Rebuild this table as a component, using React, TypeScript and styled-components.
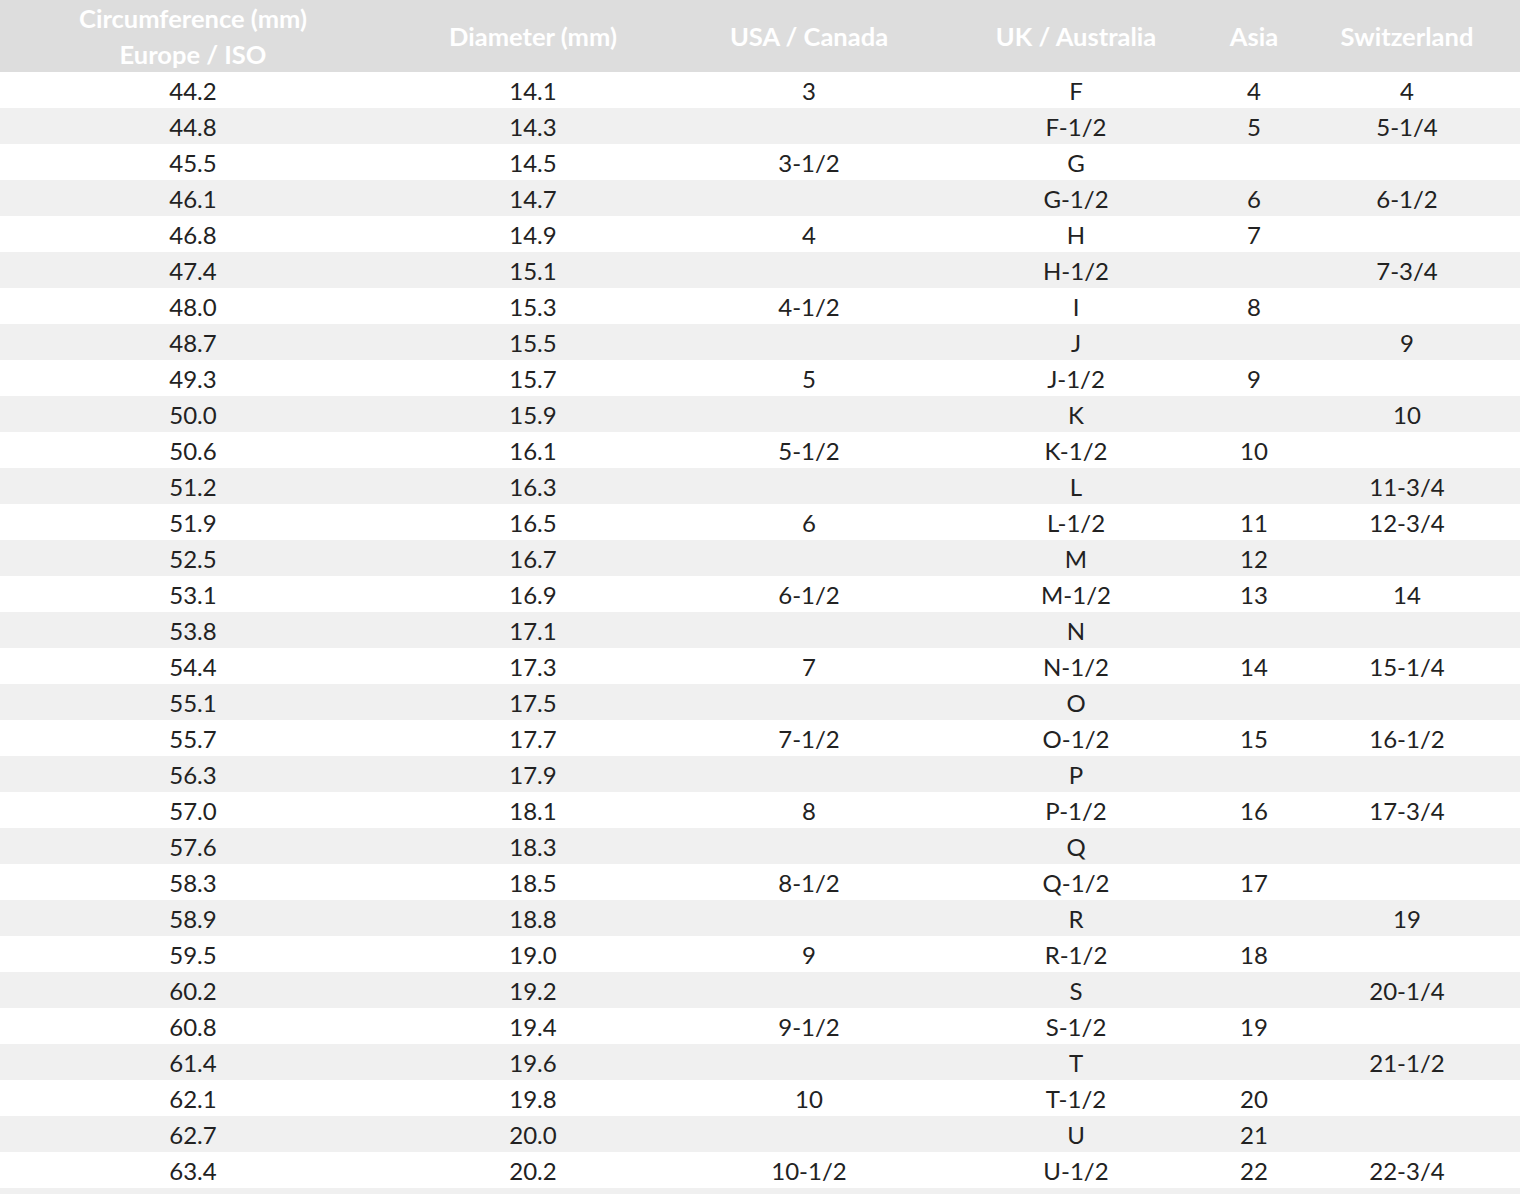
import React from "react";
import styled, { createGlobalStyle } from "styled-components";

const GlobalStyle = createGlobalStyle`
  html, body {
    margin: 0;
    padding: 0;
    background: #fff;
  }
  body {
    font-family: Lato, "Liberation Sans", sans-serif;
  }
`;

const Table = styled.table`
  width: 100%;
  border-collapse: collapse;
  table-layout: fixed;
  font-size: 24px;
  color: #222;
`;

const HeadCell = styled.th<{ $w: number }>`
  width: ${(p) => p.$w}px;
  height: 72px;
  padding: 0;
  background: #dddddd;
  color: #fff;
  font-size: 25.5px;
  font-weight: 700;
  line-height: 36px;
  text-align: center;
  vertical-align: middle;
`;

const Row = styled.tr`
  height: 36px;
  &:nth-child(even) {
    background: #f0f0f0;
  }
`;

const Cell = styled.td`
  box-sizing: border-box;
  padding: 1px 0 0;
  height: 36px;
  line-height: 35px;
  text-align: center;
  font-weight: 400;
`;

const columns: [React.ReactNode, number][] = [
  [<>Circumference (mm)<br />Europe / ISO</>, 386],
  ["Diameter (mm)", 294],
  ["USA / Canada", 258],
  ["UK / Australia", 276],
  ["Asia", 80],
  ["Switzerland", 226],
];

const rows: string[][] = [
  ["44.2", "14.1", "3", "F", "4", "4"],
  ["44.8", "14.3", "", "F-1/2", "5", "5-1/4"],
  ["45.5", "14.5", "3-1/2", "G", "", ""],
  ["46.1", "14.7", "", "G-1/2", "6", "6-1/2"],
  ["46.8", "14.9", "4", "H", "7", ""],
  ["47.4", "15.1", "", "H-1/2", "", "7-3/4"],
  ["48.0", "15.3", "4-1/2", "I", "8", ""],
  ["48.7", "15.5", "", "J", "", "9"],
  ["49.3", "15.7", "5", "J-1/2", "9", ""],
  ["50.0", "15.9", "", "K", "", "10"],
  ["50.6", "16.1", "5-1/2", "K-1/2", "10", ""],
  ["51.2", "16.3", "", "L", "", "11-3/4"],
  ["51.9", "16.5", "6", "L-1/2", "11", "12-3/4"],
  ["52.5", "16.7", "", "M", "12", ""],
  ["53.1", "16.9", "6-1/2", "M-1/2", "13", "14"],
  ["53.8", "17.1", "", "N", "", ""],
  ["54.4", "17.3", "7", "N-1/2", "14", "15-1/4"],
  ["55.1", "17.5", "", "O", "", ""],
  ["55.7", "17.7", "7-1/2", "O-1/2", "15", "16-1/2"],
  ["56.3", "17.9", "", "P", "", ""],
  ["57.0", "18.1", "8", "P-1/2", "16", "17-3/4"],
  ["57.6", "18.3", "", "Q", "", ""],
  ["58.3", "18.5", "8-1/2", "Q-1/2", "17", ""],
  ["58.9", "18.8", "", "R", "", "19"],
  ["59.5", "19.0", "9", "R-1/2", "18", ""],
  ["60.2", "19.2", "", "S", "", "20-1/4"],
  ["60.8", "19.4", "9-1/2", "S-1/2", "19", ""],
  ["61.4", "19.6", "", "T", "", "21-1/2"],
  ["62.1", "19.8", "10", "T-1/2", "20", ""],
  ["62.7", "20.0", "", "U", "21", ""],
  ["63.4", "20.2", "10-1/2", "U-1/2", "22", "22-3/4"],
  ["", "", "", "", "", ""],
];

export default function App() {
  return (
    <>
      <GlobalStyle />
      <Table>
        <thead>
          <tr>
            {columns.map(([label, w], i) => (
              <HeadCell key={i} $w={w}>
                {label}
              </HeadCell>
            ))}
          </tr>
        </thead>
        <tbody>
          {rows.map((r, i) => (
            <Row key={i}>
              {r.map((c, j) => (
                <Cell key={j}>{c}</Cell>
              ))}
            </Row>
          ))}
        </tbody>
      </Table>
    </>
  );
}
